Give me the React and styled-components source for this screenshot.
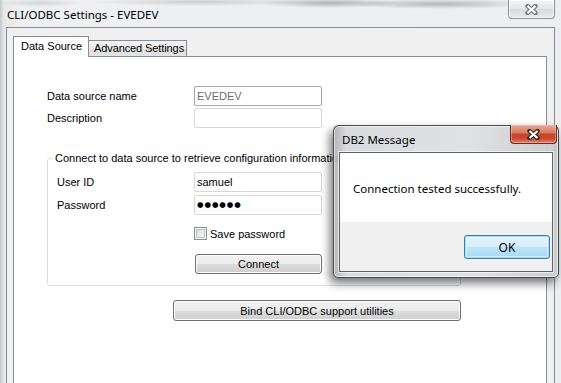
import React from "react";
import styled, { createGlobalStyle } from "styled-components";

const GlobalStyle = createGlobalStyle`
  body {
    margin: 0;
    font-family: "Liberation Sans", Arial, sans-serif;
    font-size: 11px;
    color: #000;
  }
`;

// win7 style "x" used on both caption buttons
const CloseGlyph = ({ outline }) => (
  <svg width="13" height="11" viewBox="0 0 13 11">
    <path d="M2.5 2 L10.5 9 M10.5 2 L2.5 9" stroke={outline} strokeWidth="4.4" strokeLinecap="round" fill="none" />
    <path d="M2.5 2 L10.5 9 M10.5 2 L2.5 9" stroke="#ffffff" strokeWidth="2.2" strokeLinecap="butt" fill="none" />
  </svg>
);

const App = () => {
  return (
    <Screen>
      <GlobalStyle />
      <Window>
        <TitleBar>
          <Caption>CLI/ODBC Settings - EVEDEV</Caption>
          <CaptionClose>
            <CloseGlyph outline="#7a7c7e" />
          </CaptionClose>
        </TitleBar>

        <Client>
          <TabStrip>
            <Tab active>Data Source</Tab>
            <Tab>Advanced Settings</Tab>
          </TabStrip>

          <Panel>
            <Content>
              <Row gap={2}>
                <Label width={147}>Data source name</Label>
                <Field tone="dark" muted>EVEDEV</Field>
              </Row>
              <Row>
                <Label width={147}>Description</Label>
                <Field></Field>
              </Row>

              <Group>
                <Legend>Connect to data source to retrieve configuration information</Legend>
                <Row gap={3} indent={4}>
                  <Label width={137}>User ID</Label>
                  <Field>samuel</Field>
                </Row>
                <Row indent={4}>
                  <Label width={137}>Password</Label>
                  <Field><Dots>●●●●●●</Dots></Field>
                </Row>
                <CheckRow>
                  <CheckBox />
                  <span>Save password</span>
                </CheckRow>
                <Button width={127} height={20} offset={142} top={14}>Connect</Button>
              </Group>

              <Button width={288} height={21} top={14} right>Bind CLI/ODBC support utilities</Button>
            </Content>
          </Panel>
        </Client>
      </Window>

      <Dialog>
        <DialogTitleBar>
          <DialogCaption>DB2 Message</DialogCaption>
          <RedClose>
            <CloseGlyph outline="#3b2a28" />
          </RedClose>
        </DialogTitleBar>
        <DialogClient>
          <MessageArea>Connection tested successfully.</MessageArea>
          <ButtonArea>
            <OkButton>OK</OkButton>
          </ButtonArea>
        </DialogClient>
      </Dialog>
    </Screen>
  );
};

const Screen = styled.div`
position: relative;
width: 561px;
height: 383px;
overflow: hidden;

background:
  radial-gradient(70px 5px at 330px 3px, rgba(60,60,60,.34), transparent),
  radial-gradient(90px 5px at 440px 4px, rgba(60,60,60,.32), transparent),
  radial-gradient(110px 4px at 200px 2px, rgba(110,110,110,.26), transparent),
  radial-gradient(40px 4px at 40px 3px, rgba(110,110,110,.22), transparent),
  linear-gradient(to right, #c4c6c8 0, #e6e8ea 4px, #eef0f1 20px, #eceeef 100%);
`

const Window = styled.div`
display: flex;
flex-direction: column;
height: 100%;
box-sizing: border-box;
padding: 0 6px;
`

const TitleBar = styled.div`
display: flex;
align-items: flex-start;
height: 27px;
flex-shrink: 0;
`

const Caption = styled.span`
align-self: center;
margin-left: 1px;
margin-top: 2px;
font-family: "Noto Sans", "Open Sans", sans-serif;
font-size: 11.5px;
`

const CaptionClose = styled.div`
margin-left: auto;
width: 47px;
height: 19px;
box-sizing: border-box;
display: flex;
align-items: center;
justify-content: center;

border: 1px solid #8f9194;
border-top: none;
border-radius: 0 0 4px 4px;
background: linear-gradient(#f6f6f6, #e4e5e6 50%, #d9dadb 51%, #e8e9ea);
box-shadow: inset 0 0 0 1px rgba(255,255,255,.7);
`

const Client = styled.div`
flex: 1;
display: flex;
flex-direction: column;
border: 1px solid #8a8c8f;
border-bottom: none;
background: #f0f0f0;
padding: 8px 7px 0 6px;
`

const TabStrip = styled.div`
display: flex;
align-items: flex-end;
height: 20px;
`

const Tab = styled.div`
box-sizing: border-box;
border: 1px solid #898c95;
border-bottom: none;
line-height: 13px;
white-space: nowrap;

${(props) => props.active ? `
  position: relative;
  z-index: 1;
  width: 76px;
  height: 21px;
  margin-bottom: -1px;
  padding: 3px 0 0 7px;
  background: #ffffff;
` : `
  width: 99px;
  height: 16px;
  margin-left: -1px;
  padding: 1px 0 0 5px;
  letter-spacing: -0.1px;
  background: linear-gradient(#f3f3f3, #ebebeb 50%, #dedede 51%, #e4e4e4);
`}
`

const Panel = styled.div`
flex: 1;
background: #ffffff;
border: 1px solid #898c95;
border-bottom: none;
padding: 29px 0 0 33px;
`

const Content = styled.div`
width: 414px;
display: flex;
flex-direction: column;
`

const Row = styled.div`
display: flex;
align-items: center;
height: 20px;
margin-bottom: ${(props) => props.gap || 0}px;
margin-left: ${(props) => props.indent || 0}px;
`

const Label = styled.span`
width: ${(props) => props.width}px;
flex-shrink: 0;
`

const Field = styled.div`
box-sizing: border-box;
width: 128px;
height: 20px;
padding: 0 2px;
line-height: 18px;
border: 1px solid ${(props) => props.tone === "dark" ? "#a5a7aa" : "#d6d8da"};
border-radius: 2px;
color: ${(props) => props.muted ? "#6d6d6d" : "#000"};
background: #ffffff;
overflow: hidden;
`

const Dots = styled.span`
font-family: "DejaVu Sans", sans-serif;
font-size: 7.5px;
letter-spacing: 0.9px;
vertical-align: top;
`

const Group = styled.fieldset`
margin: 24px 0 0 0;
padding: 7px 0 11px 5px;
border: 1px solid #d5dfe5;
border-radius: 3px;
min-width: 0;
`

const Legend = styled.legend`
padding: 0 2px;
line-height: 13px;
white-space: nowrap;
`

const CheckRow = styled.label`
display: flex;
align-items: center;
gap: 3px;
height: 13px;
margin: 12px 0 0 141px;
`

const CheckBox = styled.span`
box-sizing: border-box;
width: 13px;
height: 13px;
border: 1px solid #8e8f8f;
background: linear-gradient(135deg, #d6d8da, #fbfbfb);
box-shadow: inset 0 0 0 1px #f4f4f4, inset 0 0 0 2px #c2c5c8;
`

const Button = styled.div`
box-sizing: border-box;
width: ${(props) => props.width}px;
height: ${(props) => props.height}px;
margin-top: ${(props) => props.top}px;
margin-left: ${(props) => props.right ? "auto" : `${props.offset}px`};
display: flex;
align-items: center;
justify-content: center;

border: 1px solid #707070;
border-radius: 3px;
background: linear-gradient(#f2f2f2, #ebebeb 50%, #dddddd 51%, #cfcfcf);
box-shadow: inset 0 0 0 1px #fcfcfc;
`

const Dialog = styled.div`
position: absolute;
left: 333px;
top: 125px;
width: 226px;
height: 153px;
box-sizing: border-box;
display: flex;
flex-direction: column;
padding: 0 5px 5px;

border: 1px solid rgba(30,30,30,.75);
border-radius: 6px 6px 5px 5px;
background: linear-gradient(to right, rgba(170,172,175,.9), rgba(214,217,220,.95) 12px, rgba(222,224,227,.95) 60%, rgba(200,203,206,.95));
box-shadow: -3px 5px 10px rgba(0,0,0,.55), inset 0 0 0 1px rgba(255,255,255,.55);
`

const DialogTitleBar = styled.div`
display: flex;
align-items: flex-start;
height: 26px;
flex-shrink: 0;
`

const DialogCaption = styled.span`
align-self: center;
margin-left: 3px;
margin-top: 1px;
font-family: "Noto Sans", "Open Sans", sans-serif;
font-size: 11.5px;
`

const RedClose = styled.div`
margin: -1px -4px 0 auto;
width: 47px;
height: 19px;
box-sizing: border-box;
display: flex;
align-items: center;
justify-content: center;

border: 1px solid #6c2a20;
border-top: none;
border-radius: 0 0 4px 4px;
background: linear-gradient(#e9a99a, #d9785f 45%, #c5442b 50%, #c94a30 75%, #e08a6c);
box-shadow: inset 0 0 0 1px rgba(255,200,190,.45);
`

const DialogClient = styled.div`
flex: 1;
display: flex;
flex-direction: column;
border: 1px solid #5f6163;
box-shadow: 0 0 0 1px rgba(255,255,255,.6);
`

const MessageArea = styled.div`
height: 69px;
box-sizing: border-box;
padding: 28px 0 0 13px;
background: #ffffff;
font-family: "Noto Sans", "Open Sans", sans-serif;
font-size: 11.5px;
line-height: 16px;
white-space: nowrap;
`

const ButtonArea = styled.div`
flex: 1;
display: flex;
justify-content: flex-end;
align-items: flex-start;
padding: 13px 2px 0 0;
background: #f0f0f0;
`

const OkButton = styled.div`
box-sizing: border-box;
width: 86px;
height: 24px;
display: flex;
align-items: center;
justify-content: center;
font-family: "Noto Sans", "Open Sans", sans-serif;
font-size: 12px;

border: 1px solid #3c7fb1;
border-radius: 3px;
background: linear-gradient(#e5f4fc, #d4edfb 50%, #bde4f9 51%, #a7d9f5);
box-shadow: inset 0 0 0 1px #9fdcf7, inset 0 0 0 2px rgba(255,255,255,.5);
`

export default App;
